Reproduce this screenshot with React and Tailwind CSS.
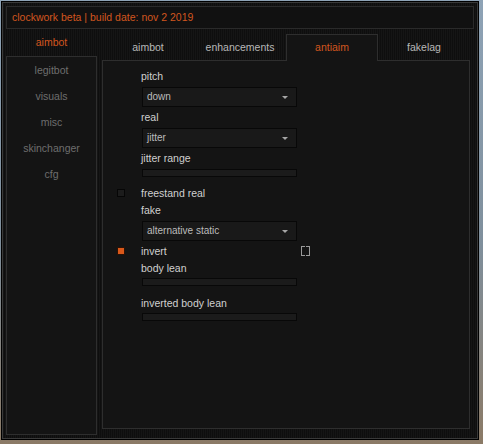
import React from "react";

const ORANGE = "text-[#d2561f]";

function Label({ children }) {
  return <div className="h-[12px] leading-[12px] text-[10.5px] text-[#d0d0d0]">{children}</div>;
}

function Dropdown({ value }) {
  return (
    <div className="ml-[39px] w-[155px] h-[20px] border border-[#080808] bg-[#191919] flex items-center justify-between pl-[4px] pr-[8px]">
      <span className="text-[10px] text-[#bcbcbc] leading-none">{value}</span>
      <span className="w-0 h-0 border-l-[3px] border-r-[3px] border-t-[3px] border-l-transparent border-r-transparent border-t-[#a6a6a6]" />
    </div>
  );
}

function Slider() {
  return <div className="ml-[39px] w-[155px] h-[8px] border border-[#080808] bg-[#1b1b1b]" />;
}

function KeyBind() {
  return (
    <div className="flex gap-px h-[10px]">
      <div className="w-[4px] h-full border-l border-t border-b border-[#9a9a9a]" />
      <div className="w-[4px] h-full border-r border-t border-b border-[#9a9a9a]" />
    </div>
  );
}

function Row({ children, checked, showCheck, extra }) {
  return (
    <div className="flex items-center h-[12px]">
      <div className="w-[38px] flex items-center">
        {showCheck && (
          <div
            className={`ml-[14px] w-[8px] h-[8px] border ${
              checked ? "border-[#2a1206] bg-[#d9581a]" : "border-[#060606] bg-[#1c1c1c]"
            }`}
          />
        )}
      </div>
      <div className="w-[160px]">
        <Label>{children}</Label>
      </div>
      {extra}
    </div>
  );
}

export default function App() {
  const sideItems = ["legitbot", "visuals", "misc", "skinchanger", "cfg"];
  const tabs = ["aimbot", "enhancements", "antiaim", "fakelag"];

  return (
    <div
      className="w-[483px] h-[444px] pl-px pt-px bg-[linear-gradient(180deg,#8ea3b6_0%,#7f8f9c_55%,#8b7a66_100%)]"
      style={{ fontFamily: '"Liberation Sans", Arial, sans-serif' }}
    >
      <div className="w-[478px] h-[439px] border border-black bg-black">
        <div className="h-full border border-[#3a3a3a] p-[3px] flex flex-col bg-[repeating-linear-gradient(90deg,#151515_0px,#151515_1px,#0e0e0e_1px,#0e0e0e_2px)]">
          {/* title */}
          <div className={`h-[23px] shrink-0 border border-[#2a2a2a] bg-[#111111] px-[5px] flex items-center text-[10.5px] ${ORANGE}`}>
            clockwork beta | build date: nov 2 2019
          </div>

          <div className="flex flex-1 min-h-0">
            {/* left sidebar */}
            <div className="w-[91px] flex flex-col">
              <div className={`h-[27px] shrink-0 flex items-center justify-center text-[10.5px] pt-px ${ORANGE}`}>aimbot</div>
              <div className="flex-1 border border-[#2e2e2e] bg-[#141414] pt-px">
                {sideItems.map((s) => (
                  <div key={s} className="h-[26px] flex items-center justify-center text-[10.5px] text-[#6e6e6e]">
                    {s}
                  </div>
                ))}
              </div>
            </div>

            {/* right content */}
            <div className="ml-[5px] w-[368px] flex flex-col pt-[5px] pb-[6px]">
              <div className="h-[26px] shrink-0 flex items-start">
                {tabs.map((t) =>
                  t === "antiaim" ? (
                    <div
                      key={t}
                      className={`relative z-10 w-[92px] h-[27px] border-l border-t border-r border-[#2e2e2e] bg-[#141414] flex items-center justify-center text-[10.5px] ${ORANGE}`}
                    >
                      {t}
                    </div>
                  ) : (
                    <div key={t} className="w-[92px] h-[26px] pt-px flex items-center justify-center text-[10.5px] text-[#b8b8b8]">
                      {t}
                    </div>
                  )
                )}
              </div>

              <div className="flex-1 border border-[#2e2e2e] bg-[#141414] pt-[9px]">
                <div className="ml-[38px]"><Label>pitch</Label></div>
                <div className="mt-[5px]"><Dropdown value="down" /></div>
                <div className="mt-[4px] ml-[38px]"><Label>real</Label></div>
                <div className="mt-[5px]"><Dropdown value="jitter" /></div>
                <div className="mt-[4px] ml-[38px]"><Label>jitter range</Label></div>
                <div className="mt-[5px]"><Slider /></div>
                <div className="mt-[10px]"><Row showCheck>freestand real</Row></div>
                <div className="mt-[5px] ml-[38px]"><Label>fake</Label></div>
                <div className="mt-[5px]"><Dropdown value="alternative static" /></div>
                <div className="mt-[4px]">
                  <Row showCheck checked extra={<KeyBind />}>
                    invert
                  </Row>
                </div>
                <div className="mt-[5px] ml-[38px]"><Label>body lean</Label></div>
                <div className="mt-[4px]"><Slider /></div>
                <div className="mt-[11px] ml-[38px]"><Label>inverted body lean</Label></div>
                <div className="mt-[4px]"><Slider /></div>
              </div>
            </div>
          </div>
        </div>
      </div>
    </div>
  );
}
